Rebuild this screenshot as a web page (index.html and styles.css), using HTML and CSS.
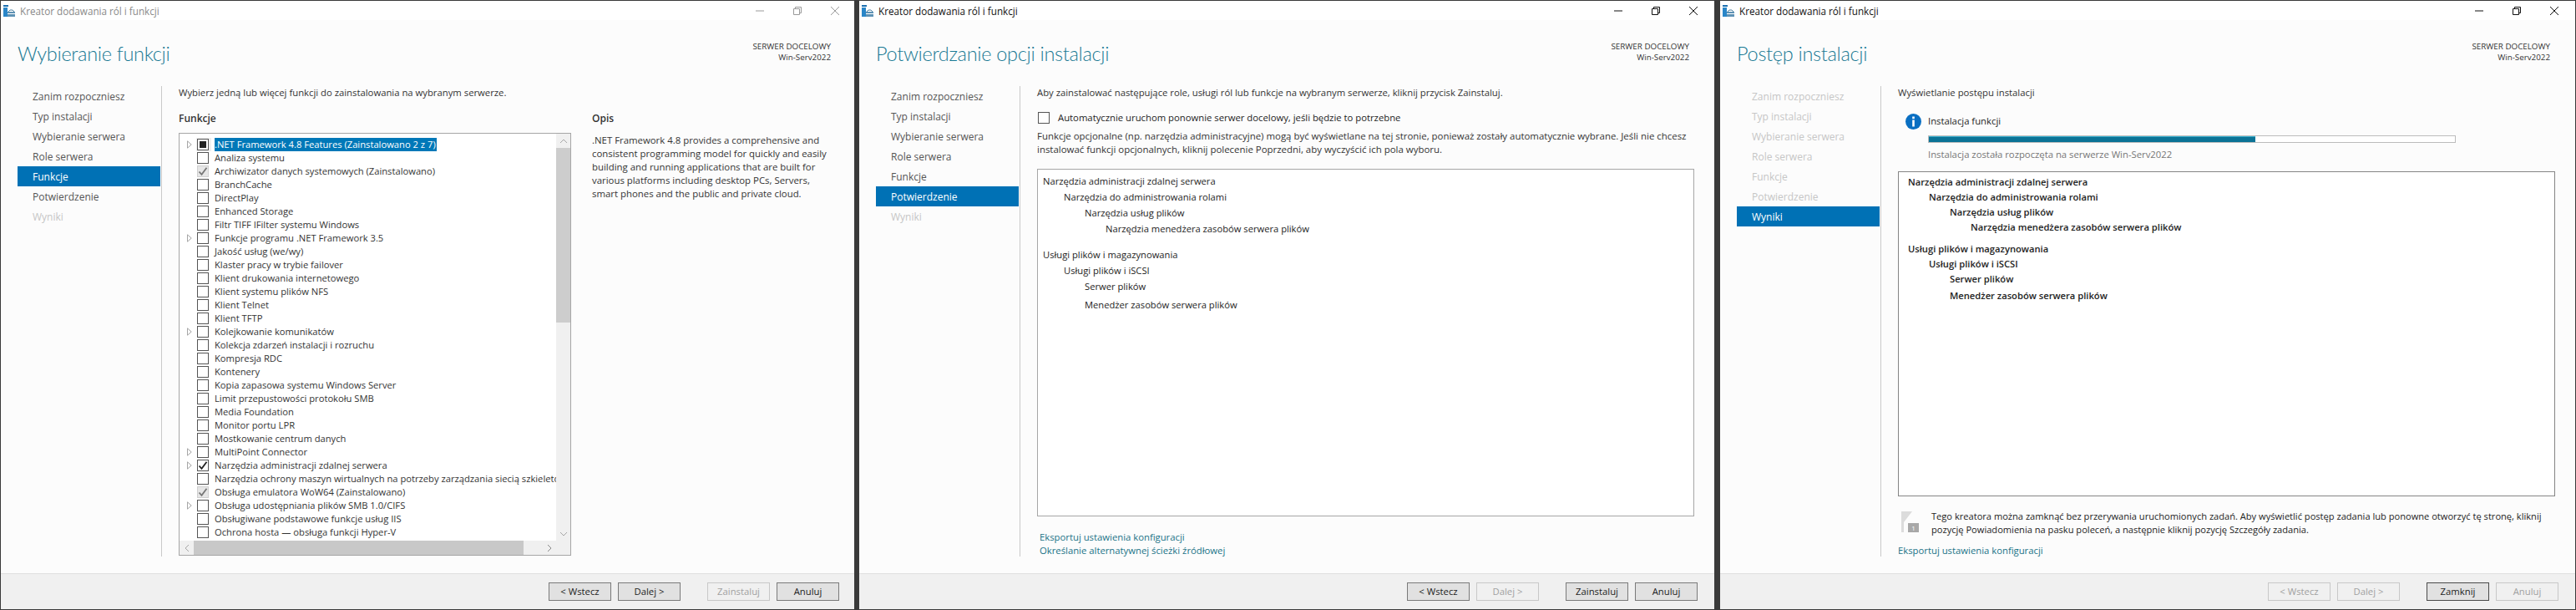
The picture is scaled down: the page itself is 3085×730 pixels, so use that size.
FILE: index.html
```html
<!DOCTYPE html>
<html lang="pl">
<head>
    <meta charset="UTF-8" />
    <title>Kreator dodawania ról i funkcji</title>
    <link rel="stylesheet" href="styles.css">
</head>
<body>
    <svg class="defs" width="0" height="0">
        <symbol id="app" viewBox="0 0 14 14">
            <rect x="0" y="0" width="6" height="2" fill="#1c6fb0"/>
            <rect x="0" y="3" width="5" height="11" fill="#2a86c8"/>
            <path d="M5 8h9v6H5z" fill="#5f93b5"/>
            <path d="M6 8l2-2h3l2 2" fill="none" stroke="#4a7f9f"/>
            <path d="M5 10.5h9" stroke="#fff"/>
        </symbol>
        <symbol id="exp" viewBox="0 0 6 10">
            <path d="M.5.8v8.4L5.2 5z" fill="#fff" stroke="#a6a6a6"/>
        </symbol>
        <symbol id="tick" viewBox="0 0 12 12">
            <path d="M1.5 6.5l3 3.3 6-8" fill="none" stroke="currentColor" stroke-width="1.8"/>
        </symbol>
        <symbol id="min" viewBox="0 0 10 10"><path d="M0 5h10" stroke="currentColor"/></symbol>
        <symbol id="res" viewBox="0 0 10 10"><path d="M.5 2.5h7v7h-7zM2.5 2.5v-2h7v7h-2" fill="none" stroke="currentColor"/></symbol>
        <symbol id="cls" viewBox="0 0 10 10"><path d="M0 0l10 10M10 0L0 10" stroke="currentColor"/></symbol>
    </svg>

    <div class="desktop">
        <!-- okno 1: funkcje -->
        <section class="pane">
            <div class="wizard inactive">
                <div class="titlebar">
                    <svg class="app-icon"><use href="#app"/></svg>
                    <span class="title-text">Kreator dodawania ról i funkcji</span>
                    <div class="controls">
                        <svg><use href="#min"/></svg>
                        <svg><use href="#res"/></svg>
                        <svg><use href="#cls"/></svg>
                    </div>
                </div>
                <header class="head">
                    <h1>Wybieranie funkcji</h1>
                    <div class="server">SERWER DOCELOWY<br>Win-Serv2022</div>
                </header>
                <div class="content">
                    <ul class="nav">
                        <li>Zanim rozpoczniesz</li>
                        <li>Typ instalacji</li>
                        <li>Wybieranie serwera</li>
                        <li>Role serwera</li>
                        <li class="current">Funkcje</li>
                        <li>Potwierdzenie</li>
                        <li class="off">Wyniki</li>
                    </ul>
                    <div class="main">
                        <p>Wybierz jedną lub więcej funkcji do zainstalowania na wybranym serwerze.</p>
                        <div class="columns">
                            <div class="col-list">
                                <h2>Funkcje</h2>
                                <div class="listbox">
                                    <div class="rows">
                                        <div class="row focus"><svg class="exp"><use href="#exp"/></svg><span class="box mixed"></span><span class="label selected">.NET Framework 4.8 Features (Zainstalowano 2 z 7)</span></div>
                                        <div class="row"><i class="noexp"></i><span class="box"></span><span class="label">Analiza systemu</span></div>
                                        <div class="row"><i class="noexp"></i><span class="box locked"><svg><use href="#tick"/></svg></span><span class="label">Archiwizator danych systemowych (Zainstalowano)</span></div>
                                        <div class="row"><i class="noexp"></i><span class="box"></span><span class="label">BranchCache</span></div>
                                        <div class="row"><i class="noexp"></i><span class="box"></span><span class="label">DirectPlay</span></div>
                                        <div class="row"><i class="noexp"></i><span class="box"></span><span class="label">Enhanced Storage</span></div>
                                        <div class="row"><i class="noexp"></i><span class="box"></span><span class="label">Filtr TIFF IFilter systemu Windows</span></div>
                                        <div class="row"><svg class="exp"><use href="#exp"/></svg><span class="box"></span><span class="label">Funkcje programu .NET Framework 3.5</span></div>
                                        <div class="row"><i class="noexp"></i><span class="box"></span><span class="label">Jakość usług (we/wy)</span></div>
                                        <div class="row"><i class="noexp"></i><span class="box"></span><span class="label">Klaster pracy w trybie failover</span></div>
                                        <div class="row"><i class="noexp"></i><span class="box"></span><span class="label">Klient drukowania internetowego</span></div>
                                        <div class="row"><i class="noexp"></i><span class="box"></span><span class="label">Klient systemu plików NFS</span></div>
                                        <div class="row"><i class="noexp"></i><span class="box"></span><span class="label">Klient Telnet</span></div>
                                        <div class="row"><i class="noexp"></i><span class="box"></span><span class="label">Klient TFTP</span></div>
                                        <div class="row"><svg class="exp"><use href="#exp"/></svg><span class="box"></span><span class="label">Kolejkowanie komunikatów</span></div>
                                        <div class="row"><i class="noexp"></i><span class="box"></span><span class="label">Kolekcja zdarzeń instalacji i rozruchu</span></div>
                                        <div class="row"><i class="noexp"></i><span class="box"></span><span class="label">Kompresja RDC</span></div>
                                        <div class="row"><i class="noexp"></i><span class="box"></span><span class="label">Kontenery</span></div>
                                        <div class="row"><i class="noexp"></i><span class="box"></span><span class="label">Kopia zapasowa systemu Windows Server</span></div>
                                        <div class="row"><i class="noexp"></i><span class="box"></span><span class="label">Limit przepustowości protokołu SMB</span></div>
                                        <div class="row"><i class="noexp"></i><span class="box"></span><span class="label">Media Foundation</span></div>
                                        <div class="row"><i class="noexp"></i><span class="box"></span><span class="label">Monitor portu LPR</span></div>
                                        <div class="row"><i class="noexp"></i><span class="box"></span><span class="label">Mostkowanie centrum danych</span></div>
                                        <div class="row"><svg class="exp"><use href="#exp"/></svg><span class="box"></span><span class="label">MultiPoint Connector</span></div>
                                        <div class="row"><svg class="exp"><use href="#exp"/></svg><span class="box on"><svg><use href="#tick"/></svg></span><span class="label">Narzędzia administracji zdalnej serwera</span></div>
                                        <div class="row"><i class="noexp"></i><span class="box"></span><span class="label">Narzędzia ochrony maszyn wirtualnych na potrzeby zarządzania siecią szkieletową</span></div>
                                        <div class="row"><i class="noexp"></i><span class="box locked"><svg><use href="#tick"/></svg></span><span class="label">Obsługa emulatora WoW64 (Zainstalowano)</span></div>
                                        <div class="row"><svg class="exp"><use href="#exp"/></svg><span class="box"></span><span class="label">Obsługa udostępniania plików SMB 1.0/CIFS</span></div>
                                        <div class="row"><i class="noexp"></i><span class="box"></span><span class="label">Obsługiwane podstawowe funkcje usług IIS</span></div>
                                        <div class="row"><i class="noexp"></i><span class="box"></span><span class="label">Ochrona hosta — obsługa funkcji Hyper-V</span></div>
                                    </div>
                                    <div class="vbar">
                                        <span class="arrow"><svg width="10" height="6" viewBox="0 0 10 6"><path d="M1 5l4-4 4 4" fill="none" stroke="#a6a6a6"/></svg></span>
                                        <div class="vthumb"></div>
                                        <span class="arrow arrow-end"><svg width="10" height="6" viewBox="0 0 10 6"><path d="M1 1l4 4 4-4" fill="none" stroke="#a6a6a6"/></svg></span>
                                    </div>
                                    <div class="hbar">
                                        <span class="harrow"><svg width="6" height="10" viewBox="0 0 6 10"><path d="M5 1L1 5l4 4" fill="none" stroke="#a6a6a6"/></svg></span>
                                        <div class="hthumb"></div>
                                        <span class="harrow harrow-end"><svg width="6" height="10" viewBox="0 0 6 10"><path d="M1 1l4 4-4 4" fill="none" stroke="#8a8a8a"/></svg></span>
                                    </div>
                                    <div class="corner"></div>
                                </div>
                            </div>
                            <div class="col-desc">
                                <h2>Opis</h2>
                                <p class="desc">.NET Framework 4.8 provides a comprehensive and<br>consistent programming model for quickly and easily<br>building and running applications that are built for<br>various platforms including desktop PCs, Servers,<br>smart phones and the public and private cloud.</p>
                            </div>
                        </div>
                    </div>
                </div>
                <footer class="foot">
                    <button>&lt; Wstecz</button>
                    <button>Dalej &gt;</button>
                    <button class="wide" disabled>Zainstaluj</button>
                    <button>Anuluj</button>
                </footer>
            </div>
        </section>

        <!-- okno 2: potwierdzenie -->
        <section class="pane">
            <div class="wizard">
                <div class="titlebar">
                    <svg class="app-icon"><use href="#app"/></svg>
                    <span class="title-text">Kreator dodawania ról i funkcji</span>
                    <div class="controls">
                        <svg><use href="#min"/></svg>
                        <svg><use href="#res"/></svg>
                        <svg><use href="#cls"/></svg>
                    </div>
                </div>
                <header class="head">
                    <h1>Potwierdzanie opcji instalacji</h1>
                    <div class="server">SERWER DOCELOWY<br>Win-Serv2022</div>
                </header>
                <div class="content">
                    <ul class="nav">
                        <li>Zanim rozpoczniesz</li>
                        <li>Typ instalacji</li>
                        <li>Wybieranie serwera</li>
                        <li>Role serwera</li>
                        <li>Funkcje</li>
                        <li class="current">Potwierdzenie</li>
                        <li class="off">Wyniki</li>
                    </ul>
                    <div class="main">
                        <p>Aby zainstalować następujące role, usługi ról lub funkcje na wybranym serwerze, kliknij przycisk Zainstaluj.</p>
                        <div class="restart"><span class="box"></span><span class="dark">Automatycznie uruchom ponownie serwer docelowy, jeśli będzie to potrzebne</span></div>
                        <p class="optional">Funkcje opcjonalne (np. narzędzia administracyjne) mogą być wyświetlane na tej stronie, ponieważ zostały automatycznie wybrane. Jeśli nie chcesz<br>instalować funkcji opcjonalnych, kliknij polecenie Poprzedni, aby wyczyścić ich pola wyboru.</p>
                        <div class="summary summary-confirm">
                            <div>Narzędzia administracji zdalnej serwera</div>
                            <div class="lv1">Narzędzia do administrowania rolami</div>
                            <div class="lv2">Narzędzia usług plików</div>
                            <div class="lv3">Narzędzia menedżera zasobów serwera plików</div>
                            <div class="group">Usługi plików i magazynowania</div>
                            <div class="lv1">Usługi plików i iSCSI</div>
                            <div class="lv2">Serwer plików</div>
                            <div class="lv2 last">Menedżer zasobów serwera plików</div>
                        </div>
                        <div class="links">
                            <a>Eksportuj ustawienia konfiguracji</a>
                            <a>Określanie alternatywnej ścieżki źródłowej</a>
                        </div>
                    </div>
                </div>
                <footer class="foot">
                    <button>&lt; Wstecz</button>
                    <button disabled>Dalej &gt;</button>
                    <button class="wide">Zainstaluj</button>
                    <button>Anuluj</button>
                </footer>
            </div>
        </section>

        <!-- okno 3: postep -->
        <section class="pane">
            <div class="wizard">
                <div class="titlebar">
                    <svg class="app-icon"><use href="#app"/></svg>
                    <span class="title-text">Kreator dodawania ról i funkcji</span>
                    <div class="controls">
                        <svg><use href="#min"/></svg>
                        <svg><use href="#res"/></svg>
                        <svg><use href="#cls"/></svg>
                    </div>
                </div>
                <header class="head">
                    <h1>Postęp instalacji</h1>
                    <div class="server">SERWER DOCELOWY<br>Win-Serv2022</div>
                </header>
                <div class="content">
                    <ul class="nav">
                        <li class="off">Zanim rozpoczniesz</li>
                        <li class="off">Typ instalacji</li>
                        <li class="off">Wybieranie serwera</li>
                        <li class="off">Role serwera</li>
                        <li class="off">Funkcje</li>
                        <li class="off">Potwierdzenie</li>
                        <li class="current">Wyniki</li>
                    </ul>
                    <div class="main">
                        <p>Wyświetlanie postępu instalacji</p>
                        <div class="progress">
                            <svg class="info" width="19" height="19" viewBox="0 0 19 19">
                                <circle cx="9.5" cy="9.5" r="9.5" fill="#0a6fc2"/>
                                <rect x="8.2" y="3.5" width="2.6" height="2.6" fill="#fff"/>
                                <rect x="8.2" y="7.5" width="2.6" height="8" fill="#fff"/>
                            </svg>
                            <div class="progress-body">
                                <div class="dark">Instalacja funkcji</div>
                                <div class="bar"><div class="bar-fill" style="width: 62%"></div></div>
                                <div class="status">Instalacja została rozpoczęta na serwerze Win-Serv2022</div>
                            </div>
                        </div>
                        <div class="summary summary-progress">
                            <div>Narzędzia administracji zdalnej serwera</div>
                            <div class="lv1">Narzędzia do administrowania rolami</div>
                            <div class="lv2">Narzędzia usług plików</div>
                            <div class="lv3">Narzędzia menedżera zasobów serwera plików</div>
                            <div class="group">Usługi plików i magazynowania</div>
                            <div class="lv1">Usługi plików i iSCSI</div>
                            <div class="lv2">Serwer plików</div>
                            <div class="lv2 last">Menedżer zasobów serwera plików</div>
                        </div>
                        <div class="note">
                            <svg class="flag" width="21" height="25" viewBox="0 0 21 25">
                                <path d="M0 0h13L3 13v12H0z" fill="#dcdcdc"/>
                                <rect x="8" y="14" width="13" height="11" fill="#a8a8a8"/>
                                <text x="14.5" y="23" class="flag-num">1</text>
                            </svg>
                            <p class="dark">Tego kreatora można zamknąć bez przerywania uruchomionych zadań. Aby wyświetlić postęp zadania lub ponowne otworzyć tę stronę, kliknij<br>pozycję Powiadomienia na pasku poleceń, a następnie kliknij pozycję Szczegóły zadania.</p>
                        </div>
                        <div class="links links-tight">
                            <a>Eksportuj ustawienia konfiguracji</a>
                        </div>
                    </div>
                </div>
                <footer class="foot">
                    <button disabled>&lt; Wstecz</button>
                    <button disabled>Dalej &gt;</button>
                    <button class="wide strong">Zamknij</button>
                    <button disabled>Anuluj</button>
                </footer>
            </div>
        </section>
    </div>
</body>
</html>
```

FILE: styles.css
```css
* {
    box-sizing: border-box;
}
html, body {
    margin: 0;
    padding: 0;
    height: 730px;
    overflow: hidden;
    background-color: #3a3a3a;
}
body {
    font-family: 'Open Sans', 'Noto Sans', sans-serif;
    font-size: 11.3px;
    line-height: 16px;
    color: #333;
}
p, h1, h2, ul {
    margin: 0;
    padding: 0;
}
.defs {
    display: block;
    height: 0;
}
.desktop {
    display: grid;
    grid-template-columns: 1022px 1024px 1025px;
    column-gap: 6px;
    height: 729px;
    padding: 1px 0 0 1px;
}
.pane {
    overflow: hidden;
}
.pane + .pane + .pane {
    margin-left: 1px;
}
.wizard {
    width: 1024px;
    height: 728px;
    display: flex;
    flex-direction: column;
    background-color: #fcfcfc;
}

/* title bar */
.titlebar {
    height: 23px;
    flex: none;
    display: flex;
    align-items: center;
    background-color: #fff;
    color: #111;
    font-size: 11.7px;
    padding-left: 3px;
}
.app-icon {
    width: 14px;
    height: 14px;
    margin: 1px 6px 0 0;
}
.title-text {
    margin-top: 1px;
}
.controls {
    margin-left: auto;
    display: flex;
    gap: 35px;
    padding-right: 20px;
    color: #111;
}
.controls svg {
    width: 10px;
    height: 10px;
}
.inactive .title-text {
    color: #8a8a8a;
}
.inactive .controls {
    color: #9a9a9a;
}

/* header */
.head {
    height: 79px;
    flex: none;
    display: flex;
    justify-content: space-between;
    padding: 0 30px 0 20px;
}
h1 {
    font-family: Lato, 'Open Sans', sans-serif;
    font-weight: 300;
    font-size: 23.5px;
    letter-spacing: -0.3px;
    line-height: 32px;
    color: #1a7a94;
    margin-top: 24px;
}
.server {
    font-size: 9.8px;
    line-height: 13px;
    text-align: right;
    margin-top: 25px;
    color: #333;
}

/* middle */
.content {
    flex: 1;
    display: flex;
    min-height: 0;
    margin-bottom: 20px;
}
.nav {
    width: 193px;
    flex: none;
    list-style: none;
    padding-left: 20px;
    border-right: 1px solid #c9c9c9;
}
.nav li {
    width: 171px;
    height: 24px;
    line-height: 25px;
    padding-left: 18px;
    font-size: 12px;
    color: #555;
}
.nav .current {
    background-color: #0071b5;
    color: #fff;
}
.nav .off {
    color: #c6c6c6;
}
.main {
    flex: 1;
    min-width: 0;
    padding: 0 24px 0 20px;
}
h2 {
    font-size: 12px;
    font-weight: 600;
    line-height: 16px;
}
.dark {
    color: #222;
}

/* okno 1 */
.columns {
    display: flex;
    gap: 25px;
    margin-top: 15px;
}
.col-list {
    width: 470px;
    flex: none;
}
.col-desc {
    white-space: nowrap;
}
.desc {
    margin-top: 10px;
    font-size: 11.4px;
}
.listbox {
    margin-top: 9px;
    height: 506px;
    border: 1px solid #a6a6a6;
    display: grid;
    grid-template-columns: 1fr 17px;
    grid-template-rows: 1fr 17px;
    background-color: #fff;
}
.rows {
    overflow: hidden;
    padding-top: 5px;
    min-width: 0;
    font-size: 11.2px;
}
.row {
    height: 16px;
    display: flex;
    align-items: center;
    white-space: nowrap;
}
.exp {
    width: 6px;
    height: 10px;
    margin: 0 6px 0 9px;
    flex: none;
}
.noexp {
    width: 21px;
    flex: none;
}
.box {
    width: 14px;
    height: 14px;
    flex: none;
    border: 1px solid #555;
    background-color: #fff;
    display: flex;
    align-items: center;
    justify-content: center;
    color: #222;
}
.box svg {
    width: 12px;
    height: 12px;
}
.box.mixed::after {
    content: "";
    width: 8px;
    height: 8px;
    background-color: #222;
}
.box.locked {
    background-color: #e6e6e6;
    border-color: #cfcfcf;
    color: #777;
}
.label {
    margin-left: 7px;
    padding-right: 1px;
    color: #333;
}
.selected {
    background-color: #0078b8;
    color: #fff;
}
.focus {
    background: linear-gradient(#f0f0f0, #f0f0f0) no-repeat 20px 0 / 18px 16px;
}
.vbar {
    background-color: #f0f0f0;
    display: flex;
    flex-direction: column;
    align-items: center;
}
.arrow {
    height: 17px;
    flex: none;
    display: flex;
    align-items: center;
}
.arrow-end {
    margin-top: auto;
}
.vthumb {
    width: 100%;
    height: 209px;
    background-color: #cdcdcd;
}
.hbar {
    background-color: #f0f0f0;
    display: flex;
}
.harrow {
    width: 17px;
    flex: none;
    display: flex;
    align-items: center;
    justify-content: center;
}
.harrow-end {
    margin-left: auto;
}
.hthumb {
    width: 395px;
    background-color: #c8c8c8;
}
.corner {
    background-color: #f0f0f0;
}

/* okna 2 i 3 */
.restart {
    display: flex;
    align-items: center;
    gap: 10px;
    height: 16px;
    margin: 14px 0 0 1px;
}
.optional {
    margin-top: 6px;
    font-size: 11.45px;
    white-space: nowrap;
}
.summary {
    border: 1px solid #a6a6a6;
    background-color: #fff;
    color: #222;
    font-size: 11.2px;
}
.summary .lv1 {
    margin-left: 25px;
}
.summary .lv2 {
    margin-left: 50px;
}
.summary .lv3 {
    margin-left: 75px;
}
.summary-confirm {
    height: 416px;
    margin-top: 15px;
    padding: 4px 0 0 6px;
    line-height: 19px;
}
.summary-confirm .group {
    margin-top: 12px;
}
.summary-confirm .last {
    margin-top: 3px;
}
.summary-progress {
    height: 389px;
    margin-top: 12px;
    padding: 3px 0 0 11px;
    line-height: 18px;
    font-weight: 600;
    border-color: #858585;
}
.summary-progress .group {
    margin-top: 8px;
}
.summary-progress .last {
    margin-top: 2px;
}
.links {
    margin-top: 17px;
    padding-left: 3px;
}
.links a {
    display: block;
    color: #1a7387;
}
.links-tight {
    margin-top: 9px;
    padding-left: 0;
}
.progress {
    display: flex;
    gap: 8px;
    margin-top: 18px;
    padding-left: 9px;
}
.info {
    flex: none;
    margin-top: -1px;
}
.progress-body {
    flex: 1;
    padding-right: 119px;
}
.bar {
    height: 9px;
    margin-top: 9px;
    border: 1px solid #bcbcbc;
    background-color: #fff;
}
.bar-fill {
    height: 100%;
    background-color: #0b7396;
    border-top: 1px solid #3ab0cf;
}
.status {
    margin-top: 6px;
    color: #777;
}
.note {
    display: flex;
    gap: 15px;
    margin-top: 16px;
    padding-left: 4px;
    white-space: nowrap;
    font-size: 11.1px;
}
.flag {
    flex: none;
    margin-top: 2px;
}
.flag-num {
    fill: #fff;
    font-size: 8px;
    text-anchor: middle;
}

/* buttons */
.foot {
    height: 43px;
    flex: none;
    display: flex;
    justify-content: flex-end;
    align-items: flex-start;
    gap: 8px;
    padding: 10px 20px 0 0;
    background-color: #f0f0f0;
    border-top: 1px solid #dfdfdf;
}
button {
    width: 75px;
    height: 22px;
    padding: 0;
    font: inherit;
    line-height: 20px;
    color: #222;
    background-color: #e1e1e1;
    border: 1px solid #7a7a7a;
    border-radius: 0;
}
button:disabled {
    color: #a0a0a0;
    background-color: #f0f0f0;
    border-color: #c8c8c8;
}
button.wide {
    margin-left: 24px;
}
button.strong {
    border-color: #4a4a4a;
}
```
